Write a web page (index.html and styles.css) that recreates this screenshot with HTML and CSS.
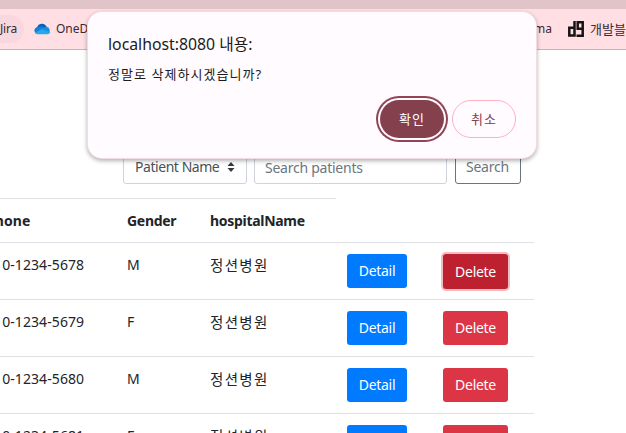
FILE: index.html
```html
<!DOCTYPE html>
<html lang="ko">
<head>
<meta charset="utf-8">
<title>Patients</title>
<link rel="stylesheet" href="styles.css">
</head>
<body>
<div class="tabstrip"></div>
<nav class="bookmarks">
  <span class="bookmark jira"><span>Jira</span></span>
  <span class="bookmark onedrive">
    <svg width="17" height="12" viewBox="0 0 17 12"><path d="M3.6 10.5A3.3 3.3 0 0 1 3 4.2 5.2 5.2 0 0 1 12.2 3L14 7z" fill="#0a5fb8"/><path d="M5.2 3.7c2-.8 3.8 0 7 2l-1 4H1.2C-.8 7.600.8 3.800 5.200 3.700z" fill="#1080d8"/><path d="M12.200 3.800A3.900 3.900 0 0 1 14 11H3.800A3.500 3.500 0 0 1 1 9.700L10 4.500q1-.7 2.200-.7z" fill="#1490df"/><path d="M1 9.700L7.500 6.200 16.300 9.200Q15.500 11.200 13.200 11.200H3.800Q2 11.200 1 9.700z" fill="#28a8ea"/></svg>
    <span>OneDrive</span>
  </span>
  <span class="bookmark figma"><span>Figma</span></span>
  <span class="bookmark blog">
    <svg width="16" height="16" viewBox="0 0 16 16" fill="none" stroke="#141414" stroke-width="2.500"><path d="M6.500 0V14.500H1.300V6.800H6.500M14.700 7.800H9.700V1.300H14.700V14.700H8.500"/></svg>
    <span>개발블</span>
  </span>
</nav>
<main>
  <form class="search">
    <div class="control select"><span>Patient Name</span>
      <svg width="8" height="10" viewBox="0 0 8 10"><path d="M4 0L7.500 4H.5zM4 10L.5 6h7z" fill="#343a40"/></svg>
    </div>
    <div class="control field"><span>Search patients</span></div>
    <div class="control submit"><span>Search</span></div>
  </form>
  <section class="table">
    <div class="row head"><b class="phone">Phone</b><b class="gender">Gender</b><b class="hospital">hospitalName</b></div>
    <div class="row"><span class="phone">010-1234-5678</span><span>M</span><span class="ko">정션병원</span><a class="btn detail"><span>Detail</span></a><a class="btn delete focused"><span>Delete</span></a></div>
    <div class="row"><span class="phone">010-1234-5679</span><span>F</span><span class="ko">정션병원</span><a class="btn detail"><span>Detail</span></a><a class="btn delete"><span>Delete</span></a></div>
    <div class="row"><span class="phone">010-1234-5680</span><span>M</span><span class="ko">정션병원</span><a class="btn detail"><span>Detail</span></a><a class="btn delete"><span>Delete</span></a></div>
    <div class="row"><span class="phone">010-1234-5681</span><span>F</span><span class="ko">정션병원</span><a class="btn detail"><span>Detail</span></a><a class="btn delete"><span>Delete</span></a></div>
  </section>
</main>
<div class="dialog">
  <div class="title">localhost:8080 내용:</div>
  <div class="message">정말로 삭제하시겠습니까?</div>
  <div class="actions"><span class="ok">확인</span><span class="cancel">취소</span></div>
</div>
</body>
</html>
```
FILE: styles.css
```css
* { box-sizing: border-box; }
body {
  margin: 0;
  width: 626px;
  height: 433px;
  overflow: hidden;
  position: relative;
  background: #fff;
  color: #212529;
  font: 14px/20px "Noto Sans", "Noto Sans CJK KR", sans-serif;
  white-space: nowrap;
}
svg { display: block; flex: none; }
.tabstrip { height: 9px; background: #e0c4c9; }
.bookmarks {
  display: flex;
  align-items: center;
  height: 41px;
  background: #ffdee4;
  border-bottom: 1px solid #d0b0b6;
  font-size: 12px;
  color: #3a2a30;
}
.bookmark { display: flex; align-items: center; flex: none; height: 28px; }
.jira { width: 24px; justify-content: flex-end; padding-right: 7px; background: #f8d8de; border-radius: 0 14px 14px 0; letter-spacing: -.2px; }
.onedrive { width: 480px; padding-left: 10px; gap: 5px; }
.figma { width: 48px; justify-content: flex-end; }
.blog { padding-left: 16px; gap: 6px; font-size: 13px; }
main { height: 383px; overflow: hidden; }
.search { display: flex; height: 148px; margin: 0; padding: 95px 0 0 123px; letter-spacing: -.25px; }
.control {
  display: flex;
  align-items: center;
  height: 39px;
  padding: 5px 11px 0;
  border: 1px solid #ced4da;
  border-radius: 3px;
}
.select { width: 124px; justify-content: space-between; color: #495057; letter-spacing: -.45px; }
.field { width: 193px; margin: 0 8px 0 7px; padding-top: 7px; padding-left: 10px; color: #6c757d; }
.submit { width: 66px; padding-left: 10px; border-color: #6c757d; color: #6c757d; }
.row {
  display: grid;
  grid-template-columns: 141px 83px 137px 96px 65px;
  width: 548px;
  height: 57px;
  margin-left: -14px;
  padding-top: 12px;
  border-top: 1px solid #dee2e6;
}
.head { width: 350px; height: 44px; letter-spacing: -.3px; }
.phone { letter-spacing: .08px; }
.ko { font-size: 14.5px; letter-spacing: 1.3px; }
.btn {
  display: flex;
  align-items: center;
  justify-content: center;
  height: 34px;
  margin-top: -1px;
  border-radius: 3px;
  color: #fff;
  letter-spacing: -.3px;
}
.detail { width: 60px; background: #007bff; }
.delete { width: 65px; background: #dc3545; }
.focused { height: 35px; background: #bd2130; box-shadow: 0 0 0 2px #f4bbc1; }
.dialog {
  position: absolute;
  left: 88px;
  top: 12px;
  width: 448px;
  height: 146px;
  padding: 21px 20px;
  border-radius: 14px;
  background: #fffbff;
  box-shadow: 0 0 0 1px #f0dce0, 0 2px 4px 1px rgba(0, 0, 0, .3);
  color: #201a1b;
}
.title { font-size: 15.8px; line-height: 22px; }
.message { margin-top: 9px; font-size: 13px; letter-spacing: 1.05px; }
.actions { display: flex; justify-content: flex-end; gap: 8px; margin-top: 16px; font-size: 13px; letter-spacing: 1px; }
.actions span { display: flex; align-items: center; justify-content: center; width: 64px; height: 38px; border-radius: 19px; }
.actions .ok { background: #85404e; color: #fff; box-shadow: 0 0 0 2px #fffbff, 0 0 0 4px #924457; }
.actions .cancel { border: 1px solid #ffb1c1; color: #85404e; }
```
